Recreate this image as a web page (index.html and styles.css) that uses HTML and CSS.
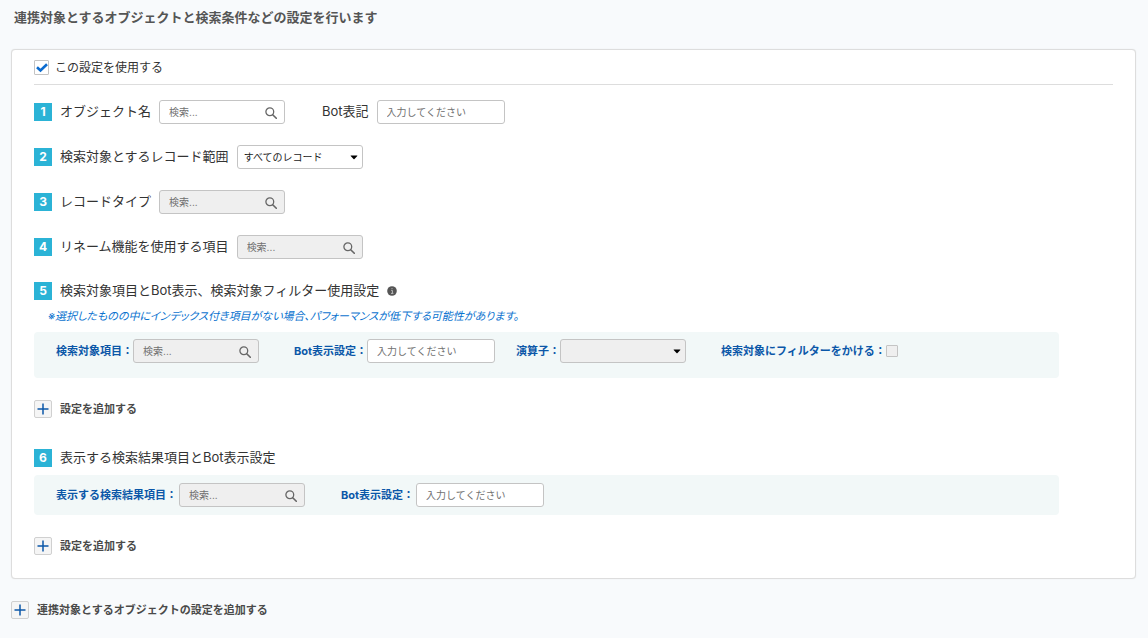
FILE: index.html
```html
<!DOCTYPE html>
<html lang="ja">
<head>
<meta charset="utf-8">
<meta name="viewport" content="width=device-width, initial-scale=1">
<title>連携対象オブジェクト設定</title>
<link rel="stylesheet" href="styles.css">
</head>
<body>
<svg class="defs" aria-hidden="true">
  <symbol id="search" viewBox="0 0 12 12"><circle cx="4.8" cy="4.8" r="3.9" fill="none" stroke="currentColor" stroke-width="1.3"/><path d="M7.7 7.7l3.6 3.6" stroke="currentColor" stroke-width="1.6" stroke-linecap="round"/></symbol>
  <symbol id="caret" viewBox="0 0 8 5"><path d="M.9.5h6.2q.5 0 .2.5L4.5 4.1q-.5.5-1 0L.7 1Q.4.5.9.5z" fill="currentColor"/></symbol>
  <symbol id="plus" viewBox="0 0 12 12"><path d="M6 .5v11M.5 6h11" stroke="currentColor" stroke-width="1.5"/></symbol>
</svg>
<main class="page">
  <h1 class="title">連携対象とするオブジェクトと検索条件などの設定を行います</h1>

  <section class="card">
    <div class="use">
      <span class="check">
        <input class="check-input" type="checkbox" id="use" checked>
        <svg class="check-mark" viewBox="0 0 12 10" aria-hidden="true"><path d="M1 4.300l3.500 3.200L11 1.300" fill="none" stroke="currentColor" stroke-width="2.600"/></svg>
      </span>
      <label for="use">この設定を使用する</label>
    </div>

    <div class="rows">
      <div class="row">
        <span class="badge">1</span>
        <label for="object">オブジェクト名</label>
        <span class="control"><input class="box" id="object" type="text" placeholder="検索..."><svg class="search-icon" aria-hidden="true"><use href="#search"/></svg></span>
        <label class="second" for="botname">Bot表記</label>
        <input class="box wide" id="botname" type="text" placeholder="入力してください">
      </div>
      <div class="row">
        <span class="badge">2</span>
        <label for="range">検索対象とするレコード範囲</label>
        <span class="control"><select class="box select" id="range"><option>すべてのレコード</option></select><svg class="caret-icon" aria-hidden="true"><use href="#caret"/></svg></span>
      </div>
      <div class="row">
        <span class="badge">3</span>
        <label for="type">レコードタイプ</label>
        <span class="control"><input class="box" id="type" type="text" placeholder="検索..." disabled><svg class="search-icon" aria-hidden="true"><use href="#search"/></svg></span>
      </div>
      <div class="row">
        <span class="badge">4</span>
        <label for="rename">リネーム機能を使用する項目</label>
        <span class="control"><input class="box" id="rename" type="text" placeholder="検索..." disabled><svg class="search-icon" aria-hidden="true"><use href="#search"/></svg></span>
      </div>
    </div>

    <div class="group">
      <h2 class="row heading"><span class="badge">5</span><span>検索対象項目とBot表示、検索対象フィルター使用設定</span>
        <svg class="info" viewBox="0 0 10 10" aria-hidden="true"><circle cx="5" cy="5" r="4.800" fill="currentColor"/><path d="M4.200 4.400h1.200v2.800M4 7.400h2.400M4.500 2.600h1" stroke="#bbb" stroke-width="1" fill="none"/></svg>
      </h2>
      <p class="note">※選択したものの中にインデックス付き項目がない場合、パフォーマンスが低下する可能性があります。</p>
      <div class="panel tall">
        <div class="field"><label for="target">検索対象項目：</label><span class="control"><input class="box" id="target" type="text" placeholder="検索..." disabled><svg class="search-icon" aria-hidden="true"><use href="#search"/></svg></span></div>
        <div class="field"><label for="bot5">Bot表示設定：</label><input class="box wide" id="bot5" type="text" placeholder="入力してください"></div>
        <div class="field near"><label for="operator">演算子：</label><span class="control"><select class="box select" id="operator" disabled><option></option></select><svg class="caret-icon" aria-hidden="true"><use href="#caret"/></svg></span></div>
        <div class="field"><label for="filter">検索対象にフィルターをかける：</label><input class="check-input small" id="filter" type="checkbox" disabled></div>
      </div>
      <div class="add"><button class="plus" id="add5" type="button" aria-label="設定を追加する"><svg class="plus-icon" aria-hidden="true"><use href="#plus"/></svg></button><label for="add5">設定を追加する</label></div>
    </div>

    <div class="group last">
      <h2 class="row heading"><span class="badge">6</span><span>表示する検索結果項目とBot表示設定</span></h2>
      <div class="panel spaced">
        <div class="field"><label for="result">表示する検索結果項目：</label><span class="control"><input class="box" id="result" type="text" placeholder="検索..." disabled><svg class="search-icon" aria-hidden="true"><use href="#search"/></svg></span></div>
        <div class="field"><label for="bot6">Bot表示設定：</label><input class="box wide" id="bot6" type="text" placeholder="入力してください"></div>
      </div>
      <div class="add"><button class="plus" id="add6" type="button" aria-label="設定を追加する"><svg class="plus-icon" aria-hidden="true"><use href="#plus"/></svg></button><label for="add6">設定を追加する</label></div>
    </div>
  </section>

  <div class="add"><button class="plus" id="addobj" type="button" aria-label="連携対象とするオブジェクトの設定を追加する"><svg class="plus-icon" aria-hidden="true"><use href="#plus"/></svg></button><label for="addobj">連携対象とするオブジェクトの設定を追加する</label></div>
</main>
</body>
</html>
```
FILE: styles.css
```css
* { box-sizing: border-box; }
body {
  margin: 0;
  background: #f8fafc;
  color: #333;
  font: 13px/20px Inter, "Noto Sans CJK JP", sans-serif;
}
.defs { position: absolute; width: 0; height: 0; }
.page { padding: 7px 12px 18px 11px; }
.title { margin: 0 0 22px; padding-left: 3px; font-size: 13px; font-weight: 700; color: #555; }

.card {
  padding: 10px 22px 23px;
  background: #fff;
  border: 1px solid #ddd;
  border-radius: 4px;
  box-shadow: 0 0 1px #ddd;
}
.use {
  display: flex;
  align-items: center;
  gap: 6px;
  height: 25px;
  padding-bottom: 9px;
  border-bottom: 1px solid #ddd;
  font-size: 12px;
}
.check { position: relative; display: flex; }
.check-input {
  appearance: none;
  width: 15px;
  height: 15px;
  margin: 0;
  background: #fff;
  border: 1px solid #c4c4c4;
  border-radius: 1px;
}
.check-input.small { width: 12px; height: 12px; background: #efefef; }
.check-mark { position: absolute; top: 3px; left: 2px; width: 12px; height: 10px; color: #0b6bcf; pointer-events: none; }

.rows { display: flex; flex-direction: column; gap: 21px; padding-top: 15px; }
.row { display: flex; align-items: center; gap: 8px; height: 24px; }
.row > label, .heading > span:not(.badge) { padding-bottom: 2px; }
.badge {
  width: 18px;
  height: 18px;
  background: #2bb3d6;
  color: #fff;
  font-size: 12px;
  font-weight: 700;
  line-height: 18px;
  text-align: center;
}
.second { margin-left: 29px; }

.control { position: relative; display: flex; }
.box {
  width: 126px;
  height: 24px;
  padding: 0 9px;
  background: #fff;
  border: 1px solid #c4c4c4;
  border-radius: 3px;
  color: #222;
  font: 10px/16px Inter, "Noto Sans CJK JP", sans-serif;
}
.box::placeholder { color: #707070; opacity: 1; }
.box:disabled { background: #efefef; opacity: 1; }
.wide { width: 128px; }
.select { appearance: none; padding: 0 6px; }
.search-icon { position: absolute; top: 7px; right: 8px; width: 12px; height: 12px; color: #666; pointer-events: none; }
.caret-icon { position: absolute; top: 10px; right: 5px; width: 8px; height: 5px; color: #000; pointer-events: none; }

.group { padding-top: 20px; }
.last { padding-top: 28px; }
.heading { margin: 0; font-size: 13px; font-weight: 400; }
.info { width: 10px; height: 10px; color: #555; }
.note {
  margin: 5px 0 0;
  padding-left: 14px;
  color: #0b73cf;
  font-size: 11px;
  font-style: italic;
  font-weight: 400;
  line-height: 16px;
  font-feature-settings: "palt";
}
.panel {
  display: flex;
  gap: 36px;
  width: 95%;
  margin-top: 5px;
  padding: 8px 22px;
  background: #f2f8f8;
  border-radius: 4px;
  color: #0b57a8;
  font-size: 11px;
  font-weight: 700;
}
.tall { gap: 35px; margin-top: 8px; padding: 7px 22px 15px; }
.field { display: flex; align-items: center; }
.spaced .field { gap: 2px; }
.near { margin-left: -14px; }

.add { display: flex; align-items: center; gap: 8px; margin-top: 22px; height: 18px; color: #4a4a4a; font-size: 11px; font-weight: 700; }
.plus {
  display: flex;
  align-items: center;
  justify-content: center;
  width: 18px;
  height: 18px;
  padding: 0;
  background: #f5f5f5;
  border: 1px solid #d0d0d0;
  border-radius: 2px;
  color: #0b57a8;
}
.plus-icon { width: 12px; height: 12px; }
```
